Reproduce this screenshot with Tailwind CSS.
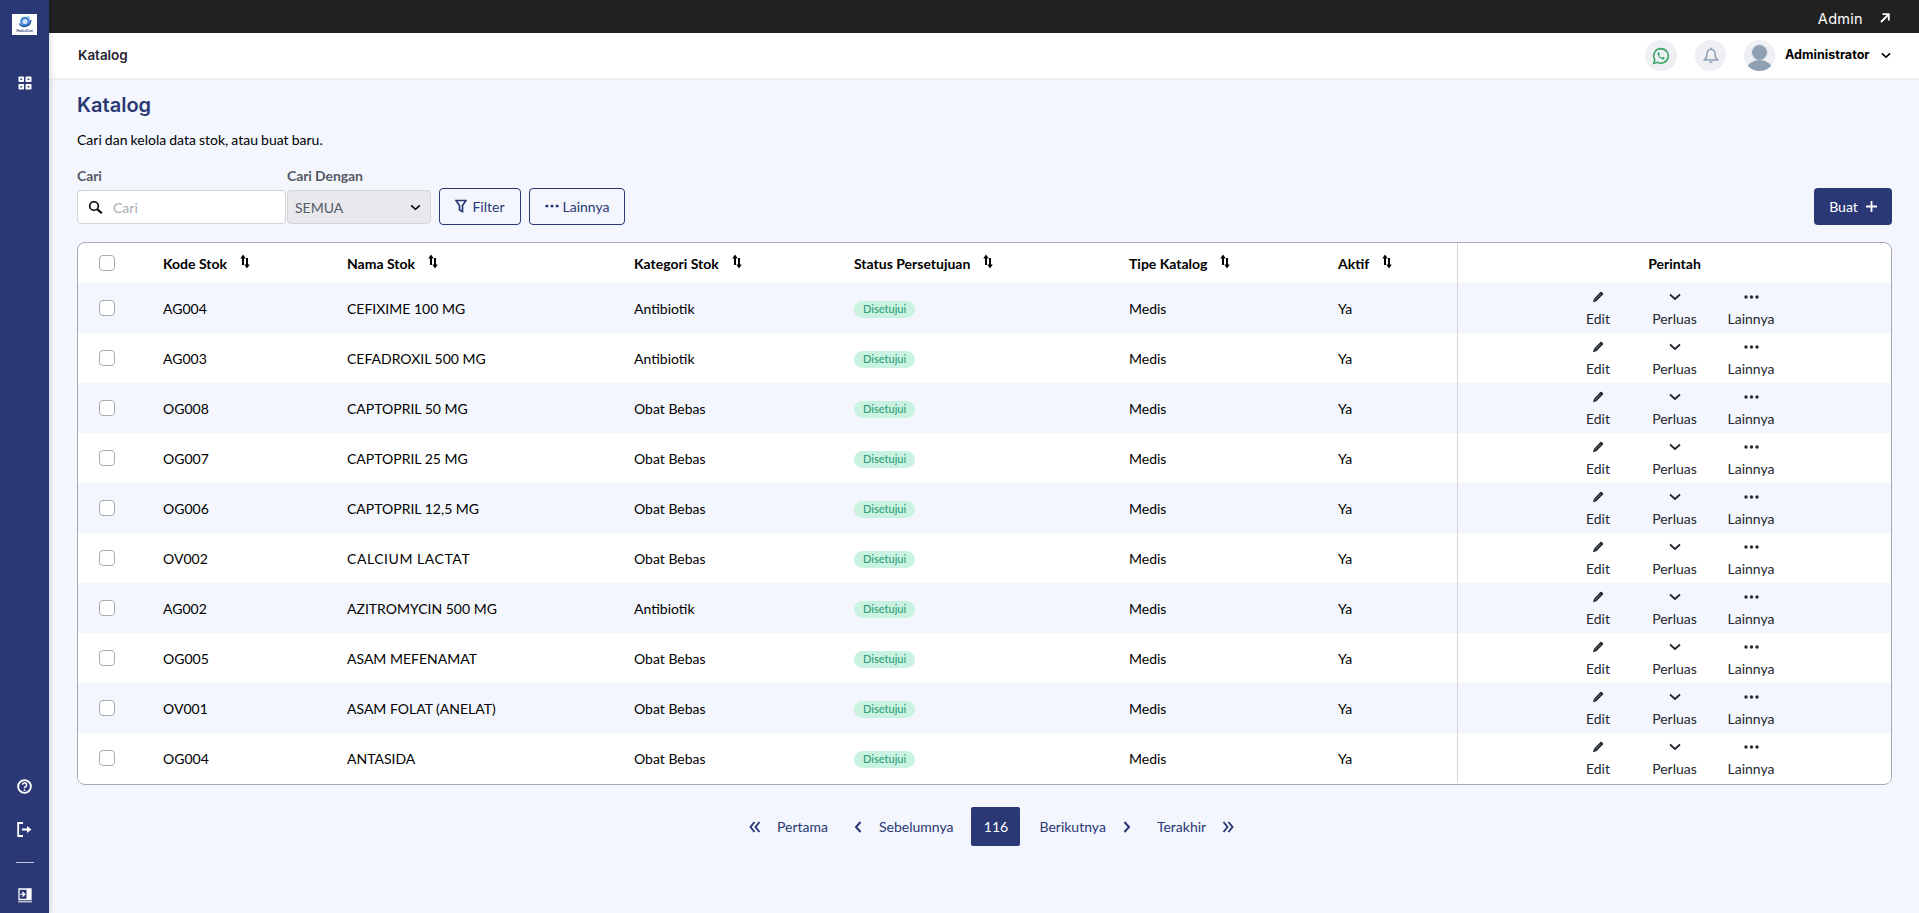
<!DOCTYPE html>
<html lang="id">
<head>
<meta charset="utf-8">
<title>Katalog</title>
<script src="https://cdn.jsdelivr.net/npm/@tailwindcss/browser@4"></script>
</head>
<body class="font-['Lato','Liberation_Sans',sans-serif] text-[14px] text-black bg-[#f3f6fd]">
<svg class="hidden">
<symbol id="sort" viewBox="0 0 10 15"><path d="M3 11V3" fill="none" stroke="currentColor" stroke-width="2"/><path d="M.3 4.400L3 .5l2.700 3.900z" fill="currentColor"/><path d="M7 4v8" fill="none" stroke="currentColor" stroke-width="2"/><path d="M4.300 10.600L7 14.500l2.700-3.900z" fill="currentColor"/></symbol>
<symbol id="pen" viewBox="0 0 12 12"><path d="M8.400 1a1 1 0 0 1 1.400 0l1.200 1.200a1 1 0 0 1 0 1.400l-6.600 6.600-3.400 1 1-3.400z" fill="currentColor"/><path d="M3 8.900L8.700 3.200" stroke="#8a8f99" stroke-width=".7"/></symbol>
<symbol id="chev" viewBox="0 0 12 8"><path d="M1 1.500l5 4.500 5-4.500" fill="none" stroke="currentColor" stroke-width="1.800"/></symbol>
<symbol id="dots" viewBox="0 0 15 4"><circle cx="2" cy="2" r="1.700" fill="currentColor"/><circle cx="7.500" cy="2" r="1.700" fill="currentColor"/><circle cx="13" cy="2" r="1.700" fill="currentColor"/></symbol>
<symbol id="cl" viewBox="0 0 8 12"><path d="M6.500 1L2 6l4.500 5" fill="none" stroke="currentColor" stroke-width="2"/></symbol>
<symbol id="cr" viewBox="0 0 8 12"><path d="M1.500 1L6 6l-4.500 5" fill="none" stroke="currentColor" stroke-width="2"/></symbol>
<symbol id="dl" viewBox="0 0 12 12"><path d="M5.500 1L1.500 6l4 5M10.500 1l-4 5 4 5" fill="none" stroke="currentColor" stroke-width="1.900"/></symbol>
<symbol id="dr" viewBox="0 0 12 12"><path d="M1.500 1l4 5-4 5M6.500 1l4 5-4 5" fill="none" stroke="currentColor" stroke-width="1.900"/></symbol>
</svg>
<div class="flex h-[913px] overflow-hidden">
  <aside class="w-[49px] shrink-0 bg-[#2a3875] flex flex-col items-center shadow-[2px_0_4px_rgba(0,0,0,0.12)] z-10">
    <div class="mt-[14px] w-[25px] h-[21px] bg-white flex flex-col items-center pt-[1px]">
      <svg class="w-[14px] h-[14px]" viewBox="0 0 14 14"><circle cx="7" cy="6.500" r="4.800" fill="#3f86d6"/><circle cx="7" cy="6.500" r="2.600" fill="#cfe3f8"/><path d="M1.200 8.500a6.200 6.200 0 0 0 11.500-3.500" fill="none" stroke="#1d4fa0" stroke-width="1.300"/><path d="M9.500 1.200a6 6 0 0 1 2.500 2" fill="none" stroke="#39a7e0" stroke-width="1"/></svg>
      <span class="text-[3px] leading-[4px] font-bold text-[#2a3875] whitespace-nowrap">MedicalCare</span>
    </div>
    <svg class="w-[14px] h-[14px] mt-[41px] text-white" viewBox="0 0 14 14"><g fill="currentColor"><path fill-rule="evenodd" d="M.5 1.200a.7.7 0 0 1 .7-.7h4.100a.7.7 0 0 1 .7.7v4.100a.7.7 0 0 1-.7.7H1.200a.7.7 0 0 1-.7-.7zM2.400 2.400v1.700h1.700V2.400zM7.500 1.200a.7.7 0 0 1 .7-.7h4.600a.7.7 0 0 1 .7.7v4.100a.7.7 0 0 1-.7.7H8.200a.7.7 0 0 1-.7-.7zM9.600 2.400v1.700h1.700V2.400zM.5 8.700a.7.7 0 0 1 .7-.7h4.100a.7.7 0 0 1 .7.7v4.100a.7.7 0 0 1-.7.7H1.200a.7.7 0 0 1-.7-.7zM2.400 9.900v1.700h1.700V9.900zM7.500 8.700a.7.7 0 0 1 .7-.7h4.600a.7.7 0 0 1 .7.7v4.100a.7.7 0 0 1-.7.7H8.200a.7.7 0 0 1-.7-.7zM9.600 9.900v1.700h1.700V9.900z"/></g></svg>
    <div class="flex-1"></div>
    <svg class="w-[15px] h-[15px] text-white" viewBox="0 0 16 16"><circle cx="8" cy="8" r="6.800" fill="none" stroke="currentColor" stroke-width="2"/><path d="M5.800 6.200a2.200 2.200 0 1 1 3.400 1.900c-.8.5-1.200.9-1.200 1.700" fill="none" stroke="currentColor" stroke-width="1.700"/><circle cx="8" cy="11.800" r="1" fill="currentColor"/></svg>
    <svg class="w-[15px] h-[15px] mt-[28px] text-white" viewBox="0 0 15 15"><path d="M6 1H1.200v13H6" fill="none" stroke="currentColor" stroke-width="1.800"/><path d="M5 7.500h6" stroke="currentColor" stroke-width="2"/><path d="M10 4l4.500 3.500L10 11z" fill="currentColor"/></svg>
    <div class="w-[18px] h-px bg-white/70 mt-[25px]"></div>
    <svg class="w-[14px] h-[15px] mt-[25px] mb-[10px] text-white" viewBox="0 0 14 15"><path d="M1 1h12v10.500H1z" fill="none" stroke="currentColor" stroke-width="1.300"/><path d="M9 1.500v9.500h3.500V1.500zM0 13.800h14" fill="currentColor" stroke="currentColor" stroke-width="1"/><path d="M2.500 6.200h3.500M4.400 3.900l2.400 2.300-2.400 2.300" fill="none" stroke="currentColor" stroke-width="1.300"/></svg>
  </aside>
  <div class="flex-1 flex flex-col min-w-0">
    <div class="h-[33px] pt-[5px] bg-[#212121] flex items-center justify-end pr-[29px] text-white font-['Inter',sans-serif] text-[14.500px]">
      <span class="tracking-[0.3px]">Admin</span>
      <svg class="w-[10px] h-[10px] ml-[17px] mb-[3px]" viewBox="0 0 10 10"><path d="M1 9l7-7M2.500 1.200h6.300v6.300" fill="none" stroke="currentColor" stroke-width="1.800"/></svg>
    </div>
    <header class="h-[45px] bg-white flex items-center pl-[29px] pr-[28px] shadow-[0_1px_3px_rgba(0,0,0,0.06)]">
      <span class="font-['Inter',sans-serif] font-semibold text-[13.400px] text-[#1f2430]">Katalog</span>
      <div class="flex-1"></div>
      <div class="w-[32px] h-[31px] rounded-full bg-[#eef0f4] flex items-center justify-center">
        <svg class="w-[18px] h-[18px] text-[#3fa46a]" viewBox="0 0 24 24"><path d="M12 2.200a9.700 9.700 0 0 0-8.300 14.700L2.400 21.700l4.900-1.300A9.700 9.700 0 1 0 12 2.200z" fill="none" stroke="currentColor" stroke-width="2.200"/><path d="M8.700 7c-.5 0-1.300.7-1.300 2.100 0 3.200 4.100 7.500 7.400 7.500 1.400 0 2.200-1 2.200-1.800 0-.5-.1-.7-.4-.9l-1.900-.9c-.3-.1-.5 0-.7.2l-.7.9c-.2.2-.4.2-.6.1-1.200-.5-2.400-1.600-3-2.800-.1-.2-.1-.4.1-.6l.6-.7c.2-.2.2-.4.1-.7l-.8-1.900c-.1-.3-.4-.4-.6-.4z" fill="currentColor"/></svg>
      </div>
      <div class="w-[31px] h-[31px] rounded-full bg-[#eef0f4] ml-[18px] flex items-center justify-center">
        <svg class="w-[16px] h-[18px] text-[#8fa0b3]" viewBox="0 0 16 18"><path d="M8 2.200c-2.700 0-4 2.200-4 4.800 0 3-1 4.500-2.500 6h13c-1.500-1.500-2.500-3-2.500-6 0-2.600-1.300-4.800-4-4.800z" fill="none" stroke="currentColor" stroke-width="1.600"/><path d="M8 .5v2" stroke="currentColor" stroke-width="1.600"/><path d="M6.300 14.500a1.700 1.700 0 0 0 3.400 0z" fill="currentColor"/></svg>
      </div>
      <div class="w-[31px] h-[31px] rounded-full bg-[#eef0f4] ml-[18px] overflow-hidden">
        <svg class="w-[31px] h-[31px]" viewBox="0 0 31 31"><circle cx="15.500" cy="12.500" r="7.500" fill="#8fa0b3"/><circle cx="15.500" cy="12.500" r="8.300" fill="none" stroke="#d8dee5" stroke-width=".6"/><ellipse cx="15.500" cy="29" rx="12.500" ry="9" fill="#8fa0b3"/></svg>
      </div>
      <span class="font-['Inter',sans-serif] font-bold text-[12.600px] w-[86px] whitespace-nowrap ml-[10px] text-black">Administrator</span>
      <svg class="w-[10px] h-[7px] ml-[10px] text-black" viewBox="0 0 12 8"><use href="#chev"/></svg>
    </header>
    <main class="flex-1 pl-[28px] pr-[27px] pt-[15px]">
      <h1 class="font-['Inter',sans-serif] font-semibold text-[20px] leading-[24px] text-[#2a3875]">Katalog</h1>
      <p class="mt-[13px] leading-[20px] [word-spacing:-0.5px]">Cari dan kelola data stok, atau buat baru.</p>
      <div class="flex items-end mt-[16px]">
        <label class="flex flex-col">
          <span class="text-[#555a64] font-bold leading-[20px] h-[24px] tracking-[-0.1px]">Cari</span>
          <span class="w-[209px] h-[34px] bg-white border border-[#d2d2d6] rounded-[4px] flex items-center pl-[10px] mb-[1px]">
            <svg class="w-[15px] h-[15px] text-black" viewBox="0 0 15 15"><circle cx="6" cy="6" r="4.300" fill="none" stroke="currentColor" stroke-width="1.600"/><path d="M9.300 9.300l4.500 4" stroke="currentColor" stroke-width="2.200"/></svg>
            <span class="ml-[10px] text-[#a8adb7] text-[14px]">Cari</span>
          </span>
        </label>
        <label class="flex flex-col ml-[1px]">
          <span class="text-[#555a64] font-bold leading-[20px] h-[24px] tracking-[-0.1px] whitespace-nowrap">Cari Dengan</span>
          <span class="w-[144px] h-[34px] bg-[#e9e9ed] border border-[#d5d5d8] rounded-[4px] flex items-center pl-[7px] pr-[9px] mb-[1px]">
            <span class="text-[#555b66] flex-1">SEMUA</span>
            <svg class="w-[11px] h-[7px] text-black" viewBox="0 0 12 8"><use href="#chev"/></svg>
          </span>
        </label>
        <button class="ml-[8px] w-[82px] h-[37px] rounded-[4px] border border-[#2a3875] text-[#2a3875] flex items-center justify-center">
          <svg class="w-[12px] h-[14px] mr-[5px] mb-[2px]" viewBox="0 0 12 13"><path d="M1 1h10L7.500 6v6L4.500 10.500V6z" fill="none" stroke="currentColor" stroke-width="1.700"/></svg>Filter
        </button>
        <button class="ml-[8px] w-[96px] h-[37px] rounded-[4px] border border-[#2a3875] text-[#2a3875] flex items-center justify-center">
          <svg class="w-[14px] h-[4px] mr-[4px] mb-[1px]" viewBox="0 0 15 4"><use href="#dots"/></svg>Lainnya
        </button>
        <div class="flex-1"></div>
        <button class="w-[78px] h-[37px] rounded-[4px] bg-[#2a3875] text-white flex items-center justify-center">Buat
          <svg class="w-[11px] h-[11px] ml-[8px] mb-[1px]" viewBox="0 0 11 11"><path d="M5.500 0v11M0 5.500h11" stroke="currentColor" stroke-width="1.800"/></svg>
        </button>
      </div>
      <div class="mt-[17px] h-[543px] bg-white border border-[#a8a9b6] rounded-[8px] overflow-hidden">
        <div class="h-[40px] grid grid-cols-[85px_184px_287px_220px_275px_209px_119px_1fr] items-center font-bold">
          <span class="pl-[21px]"><span class="block w-[16px] h-[16px] border border-[#a9acb3] rounded-[4px]"></span></span>
          <span class="flex items-center">Kode Stok<svg class="w-[10px] h-[15px] ml-[13px] mb-[3px]"><use href="#sort"/></svg></span>
          <span class="flex items-center">Nama Stok<svg class="w-[10px] h-[15px] ml-[13px] mb-[3px]"><use href="#sort"/></svg></span>
          <span class="flex items-center">Kategori Stok<svg class="w-[10px] h-[15px] ml-[13px] mb-[3px]"><use href="#sort"/></svg></span>
          <span class="flex items-center">Status Persetujuan<svg class="w-[10px] h-[15px] ml-[13px] mb-[3px]"><use href="#sort"/></svg></span>
          <span class="flex items-center">Tipe Katalog<svg class="w-[10px] h-[15px] ml-[13px] mb-[3px]"><use href="#sort"/></svg></span>
          <span class="flex items-center">Aktif<svg class="w-[10px] h-[15px] ml-[13px] mb-[3px]"><use href="#sort"/></svg></span>
          <span class="h-full border-l border-[#d5d6dc] flex items-center justify-center">Perintah</span>
        </div>
        <div class="h-[50px] grid grid-cols-[85px_184px_287px_220px_275px_209px_119px_1fr] items-center bg-[#f3f6fd]">
          <span class="pl-[21px]"><span class="block w-[16px] h-[16px] border border-[#a9acb3] rounded-[4px] bg-white"></span></span>
          <span>AG004</span><span>CEFIXIME 100 MG</span><span>Antibiotik</span>
          <span class="flex pt-[3px]"><span class="inline-flex h-[17px] items-center px-[9px] rounded-full bg-[#c9f2e0] text-[#2f9e78] text-[11px] font-medium">Disetujui</span></span>
          <span>Medis</span><span>Ya</span>
          <span class="h-full border-l border-[#d5d6dc] flex justify-center text-center text-[#23272f]">
            <span class="w-[76.500px] flex flex-col items-center pt-[8px]"><svg class="w-[12px] h-[12px]"><use href="#pen"/></svg><span class="leading-[18px] mt-[7px]">Edit</span></span>
            <span class="w-[76.500px] flex flex-col items-center pt-[10px]"><svg class="w-[12px] h-[8px]"><use href="#chev"/></svg><span class="leading-[18px] mt-[9px]">Perluas</span></span>
            <span class="w-[76.500px] flex flex-col items-center pt-[12px]"><svg class="w-[15px] h-[4px]"><use href="#dots"/></svg><span class="leading-[18px] mt-[11px]">Lainnya</span></span>
          </span>
        </div>
        <div class="h-[50px] grid grid-cols-[85px_184px_287px_220px_275px_209px_119px_1fr] items-center bg-white">
          <span class="pl-[21px]"><span class="block w-[16px] h-[16px] border border-[#a9acb3] rounded-[4px] bg-white"></span></span>
          <span>AG003</span><span>CEFADROXIL 500 MG</span><span>Antibiotik</span>
          <span class="flex pt-[3px]"><span class="inline-flex h-[17px] items-center px-[9px] rounded-full bg-[#c9f2e0] text-[#2f9e78] text-[11px] font-medium">Disetujui</span></span>
          <span>Medis</span><span>Ya</span>
          <span class="h-full border-l border-[#d5d6dc] flex justify-center text-center text-[#23272f]">
            <span class="w-[76.500px] flex flex-col items-center pt-[8px]"><svg class="w-[12px] h-[12px]"><use href="#pen"/></svg><span class="leading-[18px] mt-[7px]">Edit</span></span>
            <span class="w-[76.500px] flex flex-col items-center pt-[10px]"><svg class="w-[12px] h-[8px]"><use href="#chev"/></svg><span class="leading-[18px] mt-[9px]">Perluas</span></span>
            <span class="w-[76.500px] flex flex-col items-center pt-[12px]"><svg class="w-[15px] h-[4px]"><use href="#dots"/></svg><span class="leading-[18px] mt-[11px]">Lainnya</span></span>
          </span>
        </div>
        <div class="h-[50px] grid grid-cols-[85px_184px_287px_220px_275px_209px_119px_1fr] items-center bg-[#f3f6fd]">
          <span class="pl-[21px]"><span class="block w-[16px] h-[16px] border border-[#a9acb3] rounded-[4px] bg-white"></span></span>
          <span>OG008</span><span>CAPTOPRIL 50 MG</span><span>Obat Bebas</span>
          <span class="flex pt-[3px]"><span class="inline-flex h-[17px] items-center px-[9px] rounded-full bg-[#c9f2e0] text-[#2f9e78] text-[11px] font-medium">Disetujui</span></span>
          <span>Medis</span><span>Ya</span>
          <span class="h-full border-l border-[#d5d6dc] flex justify-center text-center text-[#23272f]">
            <span class="w-[76.500px] flex flex-col items-center pt-[8px]"><svg class="w-[12px] h-[12px]"><use href="#pen"/></svg><span class="leading-[18px] mt-[7px]">Edit</span></span>
            <span class="w-[76.500px] flex flex-col items-center pt-[10px]"><svg class="w-[12px] h-[8px]"><use href="#chev"/></svg><span class="leading-[18px] mt-[9px]">Perluas</span></span>
            <span class="w-[76.500px] flex flex-col items-center pt-[12px]"><svg class="w-[15px] h-[4px]"><use href="#dots"/></svg><span class="leading-[18px] mt-[11px]">Lainnya</span></span>
          </span>
        </div>
        <div class="h-[50px] grid grid-cols-[85px_184px_287px_220px_275px_209px_119px_1fr] items-center bg-white">
          <span class="pl-[21px]"><span class="block w-[16px] h-[16px] border border-[#a9acb3] rounded-[4px] bg-white"></span></span>
          <span>OG007</span><span>CAPTOPRIL 25 MG</span><span>Obat Bebas</span>
          <span class="flex pt-[3px]"><span class="inline-flex h-[17px] items-center px-[9px] rounded-full bg-[#c9f2e0] text-[#2f9e78] text-[11px] font-medium">Disetujui</span></span>
          <span>Medis</span><span>Ya</span>
          <span class="h-full border-l border-[#d5d6dc] flex justify-center text-center text-[#23272f]">
            <span class="w-[76.500px] flex flex-col items-center pt-[8px]"><svg class="w-[12px] h-[12px]"><use href="#pen"/></svg><span class="leading-[18px] mt-[7px]">Edit</span></span>
            <span class="w-[76.500px] flex flex-col items-center pt-[10px]"><svg class="w-[12px] h-[8px]"><use href="#chev"/></svg><span class="leading-[18px] mt-[9px]">Perluas</span></span>
            <span class="w-[76.500px] flex flex-col items-center pt-[12px]"><svg class="w-[15px] h-[4px]"><use href="#dots"/></svg><span class="leading-[18px] mt-[11px]">Lainnya</span></span>
          </span>
        </div>
        <div class="h-[50px] grid grid-cols-[85px_184px_287px_220px_275px_209px_119px_1fr] items-center bg-[#f3f6fd]">
          <span class="pl-[21px]"><span class="block w-[16px] h-[16px] border border-[#a9acb3] rounded-[4px] bg-white"></span></span>
          <span>OG006</span><span>CAPTOPRIL 12,5 MG</span><span>Obat Bebas</span>
          <span class="flex pt-[3px]"><span class="inline-flex h-[17px] items-center px-[9px] rounded-full bg-[#c9f2e0] text-[#2f9e78] text-[11px] font-medium">Disetujui</span></span>
          <span>Medis</span><span>Ya</span>
          <span class="h-full border-l border-[#d5d6dc] flex justify-center text-center text-[#23272f]">
            <span class="w-[76.500px] flex flex-col items-center pt-[8px]"><svg class="w-[12px] h-[12px]"><use href="#pen"/></svg><span class="leading-[18px] mt-[7px]">Edit</span></span>
            <span class="w-[76.500px] flex flex-col items-center pt-[10px]"><svg class="w-[12px] h-[8px]"><use href="#chev"/></svg><span class="leading-[18px] mt-[9px]">Perluas</span></span>
            <span class="w-[76.500px] flex flex-col items-center pt-[12px]"><svg class="w-[15px] h-[4px]"><use href="#dots"/></svg><span class="leading-[18px] mt-[11px]">Lainnya</span></span>
          </span>
        </div>
        <div class="h-[50px] grid grid-cols-[85px_184px_287px_220px_275px_209px_119px_1fr] items-center bg-white">
          <span class="pl-[21px]"><span class="block w-[16px] h-[16px] border border-[#a9acb3] rounded-[4px] bg-white"></span></span>
          <span>OV002</span><span class="tracking-[0.55px]">CALCIUM LACTAT</span><span>Obat Bebas</span>
          <span class="flex pt-[3px]"><span class="inline-flex h-[17px] items-center px-[9px] rounded-full bg-[#c9f2e0] text-[#2f9e78] text-[11px] font-medium">Disetujui</span></span>
          <span>Medis</span><span>Ya</span>
          <span class="h-full border-l border-[#d5d6dc] flex justify-center text-center text-[#23272f]">
            <span class="w-[76.500px] flex flex-col items-center pt-[8px]"><svg class="w-[12px] h-[12px]"><use href="#pen"/></svg><span class="leading-[18px] mt-[7px]">Edit</span></span>
            <span class="w-[76.500px] flex flex-col items-center pt-[10px]"><svg class="w-[12px] h-[8px]"><use href="#chev"/></svg><span class="leading-[18px] mt-[9px]">Perluas</span></span>
            <span class="w-[76.500px] flex flex-col items-center pt-[12px]"><svg class="w-[15px] h-[4px]"><use href="#dots"/></svg><span class="leading-[18px] mt-[11px]">Lainnya</span></span>
          </span>
        </div>
        <div class="h-[50px] grid grid-cols-[85px_184px_287px_220px_275px_209px_119px_1fr] items-center bg-[#f3f6fd]">
          <span class="pl-[21px]"><span class="block w-[16px] h-[16px] border border-[#a9acb3] rounded-[4px] bg-white"></span></span>
          <span>AG002</span><span>AZITROMYCIN 500 MG</span><span>Antibiotik</span>
          <span class="flex pt-[3px]"><span class="inline-flex h-[17px] items-center px-[9px] rounded-full bg-[#c9f2e0] text-[#2f9e78] text-[11px] font-medium">Disetujui</span></span>
          <span>Medis</span><span>Ya</span>
          <span class="h-full border-l border-[#d5d6dc] flex justify-center text-center text-[#23272f]">
            <span class="w-[76.500px] flex flex-col items-center pt-[8px]"><svg class="w-[12px] h-[12px]"><use href="#pen"/></svg><span class="leading-[18px] mt-[7px]">Edit</span></span>
            <span class="w-[76.500px] flex flex-col items-center pt-[10px]"><svg class="w-[12px] h-[8px]"><use href="#chev"/></svg><span class="leading-[18px] mt-[9px]">Perluas</span></span>
            <span class="w-[76.500px] flex flex-col items-center pt-[12px]"><svg class="w-[15px] h-[4px]"><use href="#dots"/></svg><span class="leading-[18px] mt-[11px]">Lainnya</span></span>
          </span>
        </div>
        <div class="h-[50px] grid grid-cols-[85px_184px_287px_220px_275px_209px_119px_1fr] items-center bg-white">
          <span class="pl-[21px]"><span class="block w-[16px] h-[16px] border border-[#a9acb3] rounded-[4px] bg-white"></span></span>
          <span>OG005</span><span>ASAM MEFENAMAT</span><span>Obat Bebas</span>
          <span class="flex pt-[3px]"><span class="inline-flex h-[17px] items-center px-[9px] rounded-full bg-[#c9f2e0] text-[#2f9e78] text-[11px] font-medium">Disetujui</span></span>
          <span>Medis</span><span>Ya</span>
          <span class="h-full border-l border-[#d5d6dc] flex justify-center text-center text-[#23272f]">
            <span class="w-[76.500px] flex flex-col items-center pt-[8px]"><svg class="w-[12px] h-[12px]"><use href="#pen"/></svg><span class="leading-[18px] mt-[7px]">Edit</span></span>
            <span class="w-[76.500px] flex flex-col items-center pt-[10px]"><svg class="w-[12px] h-[8px]"><use href="#chev"/></svg><span class="leading-[18px] mt-[9px]">Perluas</span></span>
            <span class="w-[76.500px] flex flex-col items-center pt-[12px]"><svg class="w-[15px] h-[4px]"><use href="#dots"/></svg><span class="leading-[18px] mt-[11px]">Lainnya</span></span>
          </span>
        </div>
        <div class="h-[50px] grid grid-cols-[85px_184px_287px_220px_275px_209px_119px_1fr] items-center bg-[#f3f6fd]">
          <span class="pl-[21px]"><span class="block w-[16px] h-[16px] border border-[#a9acb3] rounded-[4px] bg-white"></span></span>
          <span>OV001</span><span>ASAM FOLAT (ANELAT)</span><span>Obat Bebas</span>
          <span class="flex pt-[3px]"><span class="inline-flex h-[17px] items-center px-[9px] rounded-full bg-[#c9f2e0] text-[#2f9e78] text-[11px] font-medium">Disetujui</span></span>
          <span>Medis</span><span>Ya</span>
          <span class="h-full border-l border-[#d5d6dc] flex justify-center text-center text-[#23272f]">
            <span class="w-[76.500px] flex flex-col items-center pt-[8px]"><svg class="w-[12px] h-[12px]"><use href="#pen"/></svg><span class="leading-[18px] mt-[7px]">Edit</span></span>
            <span class="w-[76.500px] flex flex-col items-center pt-[10px]"><svg class="w-[12px] h-[8px]"><use href="#chev"/></svg><span class="leading-[18px] mt-[9px]">Perluas</span></span>
            <span class="w-[76.500px] flex flex-col items-center pt-[12px]"><svg class="w-[15px] h-[4px]"><use href="#dots"/></svg><span class="leading-[18px] mt-[11px]">Lainnya</span></span>
          </span>
        </div>
        <div class="h-[50px] grid grid-cols-[85px_184px_287px_220px_275px_209px_119px_1fr] items-center bg-white">
          <span class="pl-[21px]"><span class="block w-[16px] h-[16px] border border-[#a9acb3] rounded-[4px] bg-white"></span></span>
          <span>OG004</span><span>ANTASIDA</span><span>Obat Bebas</span>
          <span class="flex pt-[3px]"><span class="inline-flex h-[17px] items-center px-[9px] rounded-full bg-[#c9f2e0] text-[#2f9e78] text-[11px] font-medium">Disetujui</span></span>
          <span>Medis</span><span>Ya</span>
          <span class="h-full border-l border-[#d5d6dc] flex justify-center text-center text-[#23272f]">
            <span class="w-[76.500px] flex flex-col items-center pt-[8px]"><svg class="w-[12px] h-[12px]"><use href="#pen"/></svg><span class="leading-[18px] mt-[7px]">Edit</span></span>
            <span class="w-[76.500px] flex flex-col items-center pt-[10px]"><svg class="w-[12px] h-[8px]"><use href="#chev"/></svg><span class="leading-[18px] mt-[9px]">Perluas</span></span>
            <span class="w-[76.500px] flex flex-col items-center pt-[12px]"><svg class="w-[15px] h-[4px]"><use href="#dots"/></svg><span class="leading-[18px] mt-[11px]">Lainnya</span></span>
          </span>
        </div>
      </div>
      <nav class="mt-[22px] h-[39px] flex items-center text-[#2a3875] pl-[672px]">
        <svg class="w-[12px] h-[12px]"><use href="#dl"/></svg>
        <span class="ml-[16px]">Pertama</span>
        <svg class="w-[8px] h-[12px] ml-[26px]"><use href="#cl"/></svg>
        <span class="ml-[17px]">Sebelumnya</span>
        <span class="ml-[18px] w-[49px] h-[39px] rounded-[2px] bg-[#2a3875] text-white flex items-center justify-center">116</span>
        <span class="ml-[19px]">Berikutnya</span>
        <svg class="w-[8px] h-[12px] ml-[17px]"><use href="#cr"/></svg>
        <span class="ml-[26px]">Terakhir</span>
        <svg class="w-[12px] h-[12px] ml-[16px]"><use href="#dr"/></svg>
      </nav>
    </main>
  </div>
</div>
</body>
</html>
